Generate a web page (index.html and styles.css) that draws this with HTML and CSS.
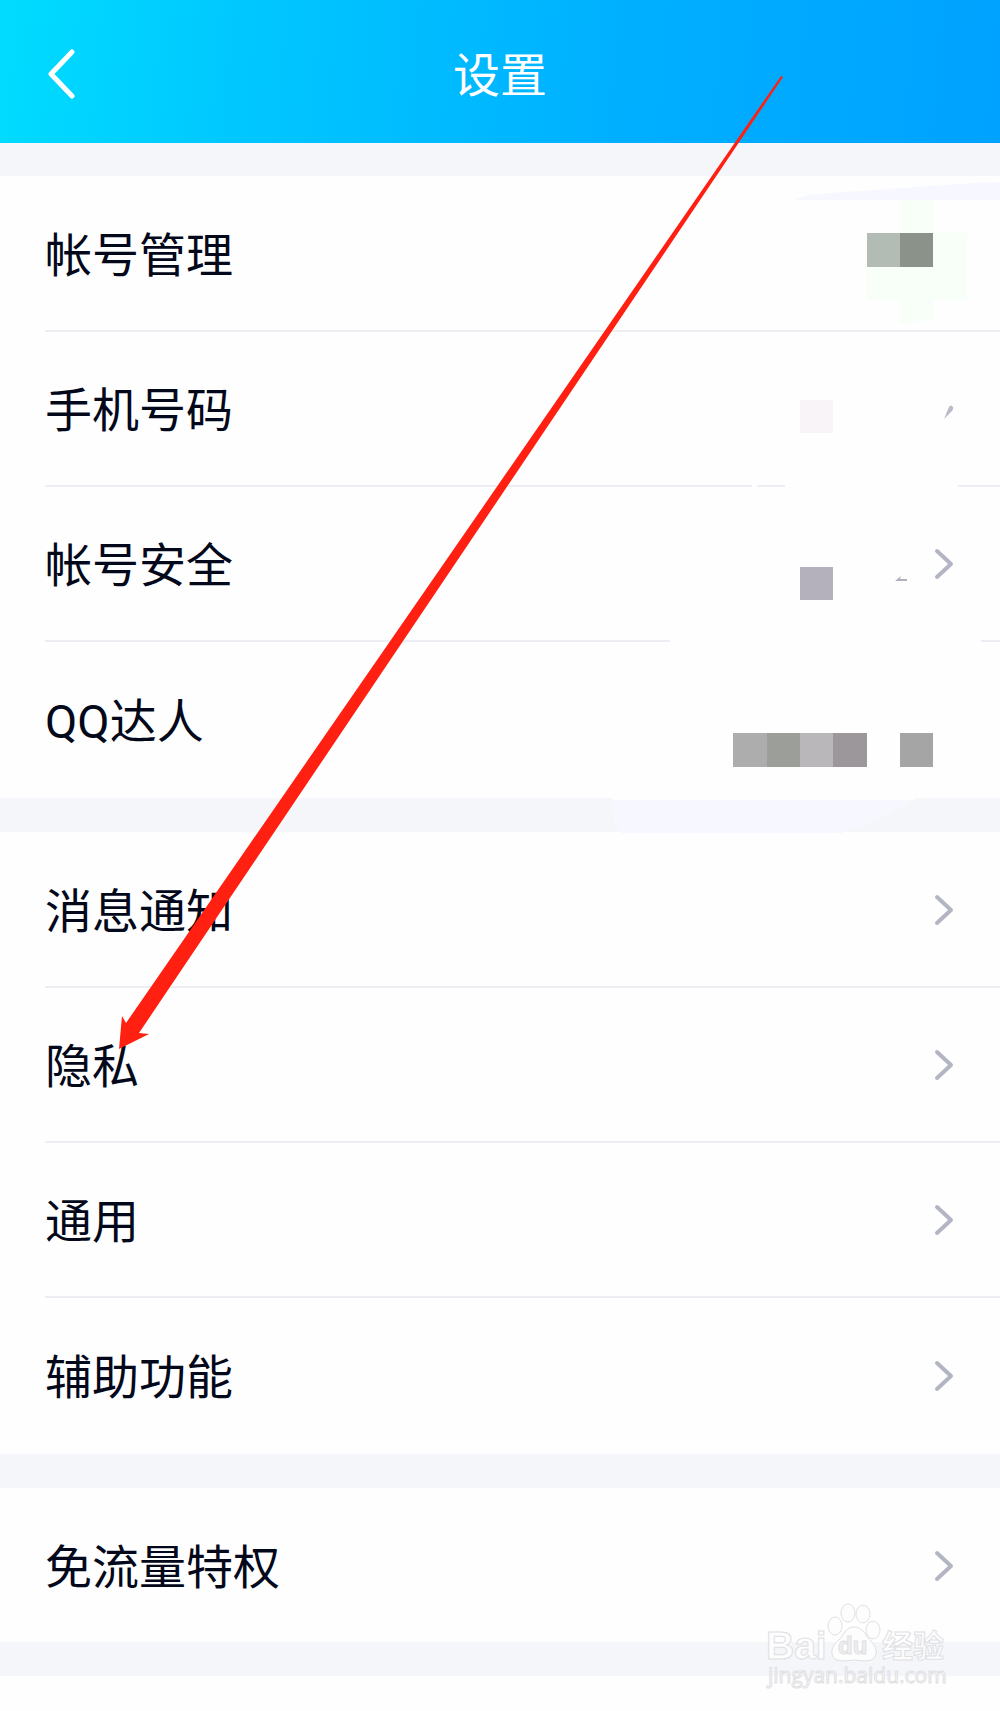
FILE: index.html
```html
<!DOCTYPE html>
<html lang="zh-CN">
<head>
  <meta charset="UTF-8" />
  <meta name="viewport" content="width=device-width, initial-scale=1.0"/>
  <title>设置</title>
  <link rel="stylesheet" href="styles.css">
</head>
<body>

  <header>
    <button class="back" type="button" aria-label="返回">
      <svg width="28" height="50" viewBox="0 0 28 50"><path d="M24 3 L3 25 L24 47"/></svg>
    </button>
    <h1>设置</h1>
  </header>

  <main>
    <section class="group">
      <a class="row" href="#account"><span>帐号管理</span></a>
      <a class="row" href="#phone"><span>手机号码</span></a>
      <a class="row" href="#security"><span>帐号安全</span>
        <svg class="chevron" viewBox="0 0 20 32"><path d="M3 3 L17 16 L3 29"/></svg>
      </a>
      <a class="row" href="#daren"><span>QQ达人</span></a>
    </section>

    <section class="group">
      <a class="row" href="#notify"><span>消息通知</span>
        <svg class="chevron" viewBox="0 0 20 32"><path d="M3 3 L17 16 L3 29"/></svg>
      </a>
      <a class="row" href="#privacy"><span>隐私</span>
        <svg class="chevron" viewBox="0 0 20 32"><path d="M3 3 L17 16 L3 29"/></svg>
      </a>
      <a class="row" href="#general"><span>通用</span>
        <svg class="chevron" viewBox="0 0 20 32"><path d="M3 3 L17 16 L3 29"/></svg>
      </a>
      <a class="row" href="#assist"><span>辅助功能</span>
        <svg class="chevron" viewBox="0 0 20 32"><path d="M3 3 L17 16 L3 29"/></svg>
      </a>
    </section>

    <section class="group">
      <a class="row" href="#traffic"><span>免流量特权</span>
        <svg class="chevron" viewBox="0 0 20 32"><path d="M3 3 L17 16 L3 29"/></svg>
      </a>
    </section>
  </main>

  <!-- hidden account details -->
  <svg class="mosaic" width="400" height="860" viewBox="600 0 400 860" aria-hidden="true">
    <path fill="#fefefe" d="M752 483h5v5h-5z M785 483h173v5h-173z M670 638h311v6h-311z"/>
    <path fill="#f7f8ff" d="M796 200 Q797 196 830 193 L960 184 Q980 182 1000 182 V200z"/>
    <path fill="#f8fff8" d="M900 200h33v33h34v67h-34v20l-33 4v-24h-33v-67h33z"/>
    <path fill="#b3bcb4" d="M867 233h33v34h-33z"/>
    <path fill="#8b928a" d="M900 233h33v34h-33z"/>
    <path fill="#f8f4f8" d="M800 400h33v33h-33z"/>
    <path fill="#b9bac8" d="M944 419 L949 407 Q951 404 953 407 Q954 409 951 412z"/>
    <path fill="#b4b1bd" d="M800 567h33v33h-33z"/>
    <path fill="#aeb0be" d="M895 581 L901 576 L900 579 H907 V581z"/>
    <path fill="#adadad" d="M733 733h34v34h-34z"/>
    <path fill="#9b9e99" d="M767 733h33v34h-33z"/>
    <path fill="#bab7bb" d="M800 733h33v34h-33z"/>
    <path fill="#9b979b" d="M833 733h34v34h-34z"/>
    <path fill="#a5a5a5" d="M900 733h33v34h-33z"/>
    <path fill="#fefefe" d="M612 798h303v2h-303z"/>
    <path fill="#f7f8ff" d="M612 800 H912 Q880 821 842 833 H621 Q612 824 612 812z"/>
  </svg>

  <svg class="pointer" width="800" height="1060" viewBox="0 0 800 1060" aria-hidden="true">
    <path d="M119 1049 L122 1016 L126 1023 L781 76 L783 77 L139 1033 L149 1034z"/>
  </svg>

  <svg class="watermark" width="200" height="96" viewBox="760 1596 200 96" role="img" aria-label="Baidu 经验">
    <text class="brand" x="766" y="1659">Bai</text>
    <g class="paw">
      <ellipse cx="835" cy="1626" rx="7" ry="9"/>
      <ellipse cx="848" cy="1613" rx="7" ry="9"/>
      <ellipse cx="863" cy="1614" rx="7" ry="9"/>
      <ellipse cx="873" cy="1630" rx="7" ry="9"/>
      <path d="M854 1627 C862 1627 865 1634 869 1639 C874 1644 877 1649 876 1654 C874 1663 864 1661 854 1660 C844 1661 834 1663 832 1654 C831 1648 835 1643 840 1639 C844 1634 846 1627 854 1627z"/>
    </g>
    <text class="du" x="838" y="1654">du</text>
    <text class="jingyan" x="882" y="1657">经验</text>
    <text class="url" x="768" y="1683">jingyan.baidu.com</text>
  </svg>

</body>
</html>
```

FILE: styles.css
```css
:root {
  --bg-color: #f4f6fa;
  --card-bg: #fefefe;
  --text-color: #03081a;
  --line-color: #edeef4;
  --arrow-color: #b3b5c3;
}

* {
  box-sizing: border-box;
  margin: 0;
  padding: 0;
}

body {
  position: relative;
  min-height: 100vh;
  font-family: Roboto, "Noto Sans CJK SC", sans-serif;
  background: var(--card-bg);
  color: var(--text-color);
}

header {
  display: grid;
  grid-template-columns: 1fr auto 1fr;
  align-items: center;
  height: 143px;
  padding: 4px 48px 0;
  background: linear-gradient(95deg, #00dcff 0%, #00c6ff 26%, #00b0ff 62%, #00a2ff 100%);
  color: white;
}

h1 {
  padding-top: 4px;
  font-size: 47px;
  font-weight: 400;
  line-height: 64px;
}

.back {
  justify-self: start;
  height: 50px;
  border: none;
  background: none;
  cursor: pointer;
}

.back svg {
  display: block;
  fill: none;
  stroke: white;
  stroke-width: 5;
  stroke-linecap: round;
  stroke-linejoin: round;
}

main {
  background: var(--bg-color);
  padding: 33px 0 34px;
}

.group {
  padding: 1px 0 0 45px;
  background: var(--card-bg);
}

.group + .group {
  margin-top: 34px;
}

.row {
  display: flex;
  justify-content: space-between;
  align-items: center;
  height: 155px;
  padding-right: 46px;
  border-bottom: 2px solid var(--line-color);
  font-size: 47px;
  line-height: 64px;
  color: var(--text-color);
  text-decoration: none;
}

.row span {
  padding-top: 4px;
}

.row:last-child {
  height: 156px;
  border-bottom: none;
}

.row:only-child {
  height: 153px;
}

.chevron {
  width: 20px;
  height: 32px;
  fill: none;
  stroke: var(--arrow-color);
  stroke-width: 4;
  stroke-linecap: round;
  stroke-linejoin: round;
}

/* overlays */
.mosaic,
.pointer,
.watermark {
  position: absolute;
  pointer-events: none;
}

.mosaic {
  top: 0;
  right: 0;
}

.pointer {
  top: 0;
  left: 0;
  fill: #ff2012;
}

.watermark {
  right: 40px;
  top: 1596px;
  fill: #fdfdfe;
  stroke: #dfe0e3;
  stroke-width: 1;
}

.watermark text {
  font-family: "Liberation Sans", "Noto Sans CJK SC", sans-serif;
  font-weight: 700;
}

.watermark .brand {
  font-size: 39px;
}

.watermark .du {
  font-size: 24px;
  fill: #eeeff2;
}

.watermark .jingyan {
  font-size: 31px;
}

.watermark .url {
  font-family: "Open Sans", sans-serif;
  font-size: 21px;
  font-weight: 400;
}
```
